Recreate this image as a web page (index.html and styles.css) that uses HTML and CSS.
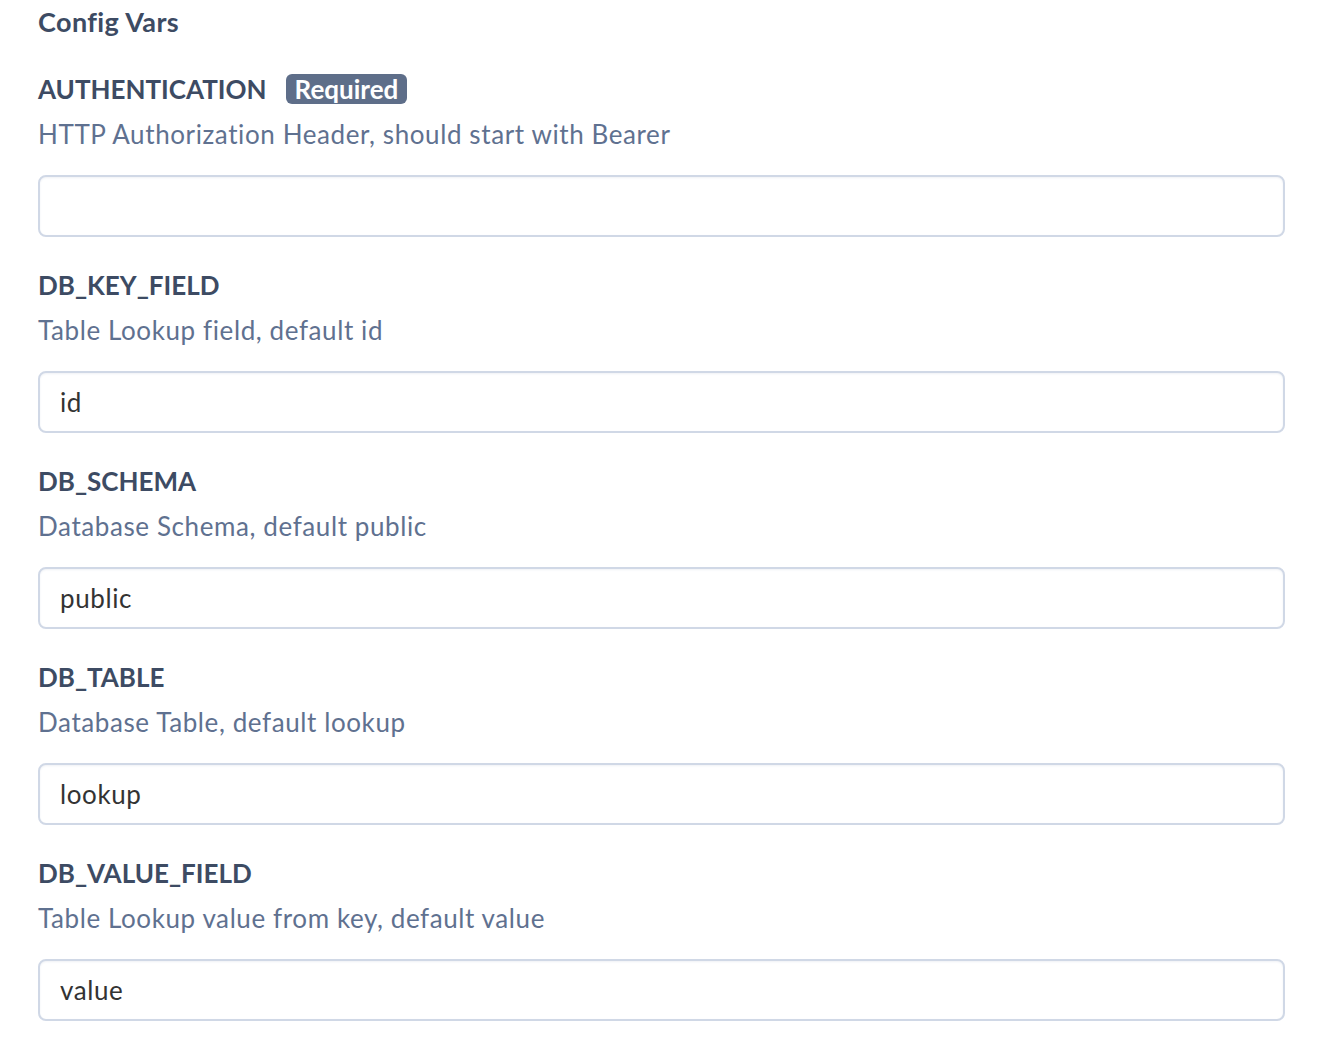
FILE: index.html
```html
<!DOCTYPE html>
<html lang="en">
<head>
<meta charset="utf-8">
<title>Config Vars</title>
<link rel="stylesheet" href="styles.css">
</head>
<body>
<main class="config">
  <h2 class="config-title">Config Vars</h2>

  <div class="field">
    <div class="field-head">
      <span class="field-name">AUTHENTICATION</span>
      <span class="badge">Required</span>
    </div>
    <p class="field-desc">HTTP Authorization Header, should start with Bearer</p>
    <input class="field-input" type="text" value="">
  </div>

  <div class="field">
    <div class="field-head">
      <span class="field-name">DB_KEY_FIELD</span>
    </div>
    <p class="field-desc">Table Lookup field, default id</p>
    <input class="field-input" type="text" value="id">
  </div>

  <div class="field">
    <div class="field-head">
      <span class="field-name">DB_SCHEMA</span>
    </div>
    <p class="field-desc">Database Schema, default public</p>
    <input class="field-input" type="text" value="public">
  </div>

  <div class="field">
    <div class="field-head">
      <span class="field-name">DB_TABLE</span>
    </div>
    <p class="field-desc">Database Table, default lookup</p>
    <input class="field-input" type="text" value="lookup">
  </div>

  <div class="field">
    <div class="field-head">
      <span class="field-name">DB_VALUE_FIELD</span>
    </div>
    <p class="field-desc">Table Lookup value from key, default value</p>
    <input class="field-input" type="text" value="value">
  </div>
</main>
</body>
</html>
```

FILE: styles.css
```css
html, body {
  margin: 0;
  padding: 0;
  background: #ffffff;
}

body {
  font-family: Lato, "Open Sans", "Liberation Sans", sans-serif;
  color: #3d4b63;
}

.config {
  padding: 4px 35px 0 38px;
  display: flex;
  flex-direction: column;
}

.config-title {
  margin: 0 0 31px 0;
  font-size: 27px;
  line-height: 36px;
  font-weight: 700;
  letter-spacing: 0.4px;
  color: #3d4b63;
}

.field {
  display: flex;
  flex-direction: column;
  margin-bottom: 30px;
}

.field-head {
  display: flex;
  align-items: center;
  gap: 19px;
  height: 36px;
}

.field-name {
  font-size: 26px;
  line-height: 36px;
  font-weight: 700;
  color: #3d4b63;
}

.badge {
  display: inline-flex;
  align-items: center;
  height: 30px;
  padding: 0 9px;
  border-radius: 6px;
  background: #5e6e89;
  color: #ffffff;
  font-size: 26px;
  font-weight: 700;
  line-height: 30px;
}

.field-desc {
  margin: 9px 0 0 0;
  font-size: 26px;
  line-height: 36px;
  font-weight: 400;
  letter-spacing: 0.6px;
  color: #5f7190;
}

.field-input {
  margin-top: 23px;
  box-sizing: border-box;
  width: 100%;
  height: 62px;
  padding: 0 20px;
  border: 2px solid #d0d8e6;
  border-radius: 8px;
  box-shadow: inset 0 1px 2px rgba(120, 140, 170, 0.12);
  background: #ffffff;
  font-family: Lato, "Open Sans", "Liberation Sans", sans-serif;
  font-size: 26px;
  letter-spacing: 0.6px;
  color: #333333;
  outline: none;
}
```
